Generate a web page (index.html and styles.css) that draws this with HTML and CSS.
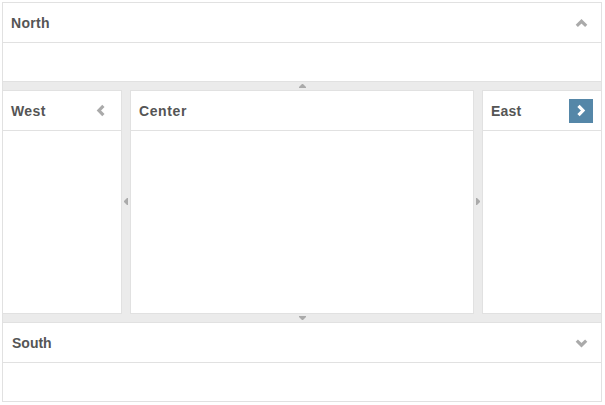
FILE: index.html
```html
<!DOCTYPE html>
<html lang="en">
<head>
<meta charset="utf-8">
<title>Border layout</title>
<link rel="stylesheet" href="styles.css">
</head>
<body>
<div class="layout">
  <section class="panel north">
    <header class="head"><h2 class="title">North</h2>
      <button class="toggle" aria-label="Collapse"><svg viewBox="0 0 24 24"><path d="M7.8 14.8 12.5 10.3 17.2 14.8"/></svg></button>
    </header>
  </section>
  <div class="split horizontal"><svg class="grip" viewBox="0 0 7 4"><path d="M0 4V3L3 0H4L7 3V4Z"/></svg></div>
  <div class="middle">
    <section class="panel west">
      <header class="head"><h2 class="title">West</h2>
        <button class="toggle" aria-label="Collapse"><svg viewBox="0 0 24 24"><path d="M14.4 6.8 9.9 11.5 14.4 16.2"/></svg></button>
      </header>
    </section>
    <div class="split vertical"><svg class="grip side" viewBox="0 0 4 7"><path d="M4 0H3L0 3V4L3 7H4Z"/></svg></div>
    <section class="panel center">
      <header class="head"><h2 class="title">Center</h2></header>
    </section>
    <div class="split vertical"><svg class="grip side" viewBox="0 0 4 7"><path d="M0 0H1L4 3V4L1 7H0Z"/></svg></div>
    <section class="panel east">
      <header class="head"><h2 class="title">East</h2>
        <button class="toggle active" aria-label="Collapse"><svg viewBox="0 0 24 24"><path d="M9.5 6.8 14 11.5 9.5 16.2"/></svg></button>
      </header>
    </section>
  </div>
  <div class="split horizontal"><svg class="grip" viewBox="0 0 7 4"><path d="M0 0H7V1L4 4H3L0 1Z"/></svg></div>
  <section class="panel south">
    <header class="head"><h2 class="title">South</h2>
      <button class="toggle" aria-label="Collapse"><svg viewBox="0 0 24 24"><path d="M7.8 9.7 12.5 14.2 17.2 9.7"/></svg></button>
    </header>
  </section>
</div>
</body>
</html>
```
FILE: styles.css
```css
* { box-sizing: border-box; }
body {
  margin: 0;
  padding: 2px;
  background: #fff;
  font-family: "Liberation Sans", Arial, sans-serif;
}
.layout {
  display: flex;
  flex-direction: column;
  width: 600px;
  height: 400px;
  background: #ebebeb;
  border: solid #e1e1e1;
  border-width: 0 1px;
}
.panel {
  background: #fff;
  border: 1px solid #e1e1e1;
}
.north, .south {
  height: 80px;
  border-width: 1px 0;
}
.middle {
  display: flex;
  height: 224px;
}
.west { width: 119px; border-left: 0; }
.center { width: 344px; }
.east { width: 119px; border-right: 0; }
.head {
  display: flex;
  align-items: center;
  justify-content: space-between;
  height: 40px;
  padding: 0 8px;
  border-bottom: 1px solid #e1e1e1;
}
.title {
  margin: 0;
  color: #555;
  font-size: 14px;
  line-height: 20px;
  font-weight: bold;
  letter-spacing: 0.3px;
  padding-top: 1px;
}
.west .title { letter-spacing: 0.4px; }
.center .title { letter-spacing: 0.6px; }
.east .title { letter-spacing: 0.2px; }
.south .title {
  padding-left: 1px;
  letter-spacing: 0;
}
.toggle {
  width: 24px;
  height: 24px;
  padding: 0;
  border: 0;
  background: none;
  color: #aaa;
}
.toggle svg {
  display: block;
  width: 24px;
  height: 24px;
  fill: none;
  stroke: currentColor;
  stroke-width: 3.2;
}
.active { background: #5587a8; color: #fff; }
.split {
  display: flex;
  align-items: center;
  justify-content: center;
}
.horizontal { height: 8px; }
.vertical { width: 8px; padding-bottom: 1px; }
.grip {
  width: 7px;
  height: 4px;
  fill: #aaa;
}
.side { width: 4px; height: 7px; }
```
